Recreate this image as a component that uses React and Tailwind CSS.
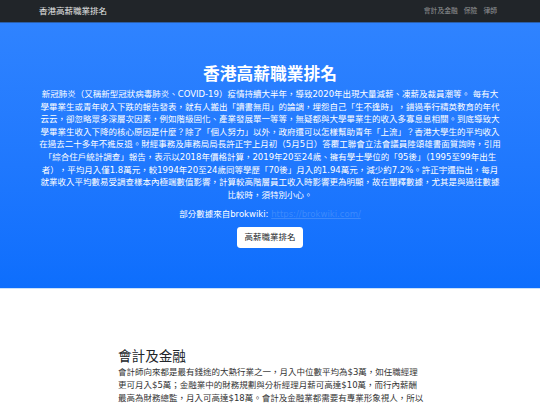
export default function App() {
  const heroLines = [
    "新冠肺炎（又稱新型冠狀病毒肺炎、COVID-19）疫情持續大半年，導致2020年出現大量減薪、凍薪及裁員潮等。 每有大",
    "學畢業生或青年收入下跌的報告發表，就有人搬出「讀書無用」的論調，埋怨自己「生不逢時」，錯過奉行精英教育的年代",
    "云云，卻忽略眾多深層次因素，例如階級固化、產業發展單一等等，無疑都與大學畢業生的收入多寡息息相關。到底導致大",
    "學畢業生收入下降的核心原因是什麼？除了「個人努力」以外，政府還可以怎樣幫助青年「上流」？香港大學生的平均收入",
    "在過去二十多年不進反退。財經事務及庫務局局長許正宇上月初（5月5日）答覆工聯會立法會議員陸頌雄書面質詢時，引用",
    "「綜合住戶統計調查」報告，表示以2018年價格計算，2019年20至24歲、擁有學士學位的「95後」（1995至99年出生",
    "者），平均月入僅1.8萬元，較1994年20至24歲同等學歷「70後」月入的1.94萬元，減少約7.2%。許正宇還指出，每月",
    "就業收入平均數易受調查樣本內極端數值影響，計算較高階層員工收入時影響更為明顯，故在闡釋數據，尤其是與過往數據",
    "比較時，須特別小心。",
  ];
  const lowerLines = [
    "會計師向來都是最有錢途的大熱行業之一，月入中位數平均為$3萬，如任職經理",
    "更可月入$5萬；金融業中的財務規劃與分析經理月薪可高達$10萬，而行內薪酬",
    "最高為財務總監，月入可高達$18萬。會計及金融業都需要有專業形象視人，所以",
  ];
  return (
    <div className="min-h-[405px] bg-white font-['DejaVu_Sans','Noto_Sans_CJK_TC',sans-serif] overflow-hidden">
      <nav className="h-[23px] bg-[#212529] flex items-center justify-between pl-[39px] pr-[43px] border-b border-[#2a5ea8]">
        <span className="text-[8.5px] leading-none text-white/90">香港高薪職業排名</span>
        <div className="flex items-center gap-[6px] text-[6.8px] leading-none text-white/50">
          <span>會計及金融</span>
          <span>保險</span>
          <span>律師</span>
        </div>
      </nav>
      <section className="bg-linear-to-b from-[#2f83ff] to-[#0d6efd] pt-[41px] pb-[40px] flex flex-col items-center text-white">
        <h1 className="text-[16.75px] leading-[20px] font-bold">香港高薪職業排名</h1>
        <p className="mt-[4px] text-[8.5px] leading-[12.6px] text-center whitespace-nowrap">
          {heroLines.map((l, i) => (
            <span key={i} className="block">{l}</span>
          ))}
        </p>
        <p className="mt-[7px] text-[8.5px] leading-[12.6px] whitespace-nowrap">
          部分數據來自brokwiki: <span className="text-[#3d8afc] underline">https://brokwiki.com/</span>
        </p>
        <button className="mt-[6px] h-[21px] px-[7px] rounded-[3.4px] bg-white text-[#212529] text-[8.5px] leading-none">
          高薪職業排名
        </button>
      </section>
      <div className="h-px bg-[#c9e0fb]"></div>
      <section className="w-[304px] mx-auto mt-[59px] text-[#212529]">
        <h2 className="text-[13.6px] leading-[16px] font-normal">會計及金融</h2>
        <p className="mt-[2px] text-[8.5px] leading-[13px] whitespace-nowrap text-[#333]">
          {lowerLines.map((l, i) => (
            <span key={i} className="block">{l}</span>
          ))}
        </p>
      </section>
    </div>
  );
}
